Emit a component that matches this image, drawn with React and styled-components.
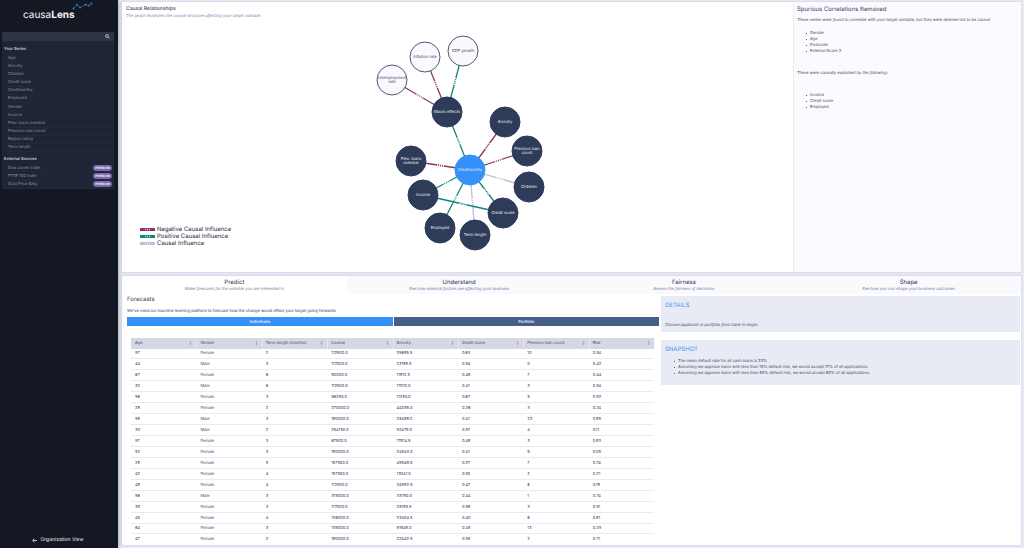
import React from "react";
import styled, { createGlobalStyle } from "styled-components";

const Global = createGlobalStyle`
  *, *::before, *::after { box-sizing: border-box; }
  html, body, #root { height: 100%; }
  body { margin: 0; background: #e9ebf4; overflow: hidden; }
  body, button, input { font-family: Inter, "Liberation Sans", sans-serif; text-rendering: geometricPrecision; }
  h1, h2, h3, p, ul { margin: 0; padding: 0; }
`;

const Page = styled.div`
  display: flex;
  height: 100vh;
  color: #3f4560;
  font-size: 4px;
  line-height: 6px;
`;

const Sidebar = styled.aside`
  flex: 0 0 118px;
  display: flex;
  flex-direction: column;
  padding: 0 4px 4px 2px;
  background: #131822;
  box-shadow: 0 0 5px rgba(60, 60, 90, 0.5);
  z-index: 1;
`;

const Logo = styled.div`
  position: relative;
  height: 32px;
  padding: 8px 0 0 21px;
  color: #f4f5f8;
  font-size: 10px;
  line-height: 14px;
  svg { position: absolute; left: 70px; top: 2px; }
`;

const SearchBar = styled.label`
  display: flex;
  align-items: center;
  height: 9px;
  padding-right: 4px;
  background: #2b3546;
  input { flex: 1; min-width: 0; height: 8px; border: 0; padding: 0 4px; background: none; color: #fff; font-size: 4px; outline: 0; }
`;

const SeriesPanel = styled.div`
  padding: 5px 0 0;
  background: #1e2534;
`;

const SeriesTitle = styled.h2`
  padding-left: 2px;
  color: #c3c9d6;
  font-size: 4px;
  font-weight: 600;
  line-height: 6px;
`;

const SeriesList = styled.ul`
  display: flex;
  flex-direction: column;
  height: ${(p) => p.$height}px;
  margin: 2px 0 4px;
  list-style: none;
  &:last-child { margin-bottom: 0; }
`;

const SeriesItem = styled.li`
  flex: 1;
  display: flex;
  align-items: center;
  justify-content: space-between;
  padding: 0 2px 0 6px;
  border-bottom: 1px solid #222b3c;
  color: #8a96ae;
  line-height: 6px;
`;

const Premium = styled.span`
  width: 19px;
  height: 6px;
  border-radius: 3px;
  background: #7766ac;
  color: #f0ecfb;
  font-size: 3px;
  font-weight: 700;
  line-height: 6px;
  text-align: center;
`;

const OrgLink = styled.a`
  display: flex;
  justify-content: center;
  align-items: center;
  gap: 3px;
  margin-top: auto;
  color: #e6e8ee;
  font-size: 5px;
  line-height: 8px;
  text-decoration: none;
`;

const Main = styled.main`
  flex: 1;
  min-width: 0;
  display: flex;
  flex-direction: column;
  gap: 4px;
  padding: 2px 3px 3px 4px;
`;

const Card = styled.section`
  flex: 1;
  min-height: 0;
  display: flex;
  background: #fff;
  box-shadow: 0 0 2px rgba(150, 155, 190, 0.5);
`;

const ForecastCard = styled(Card)`
  flex-direction: column;
`;

const GraphPane = styled.div`
  flex: 1;
  display: flex;
  flex-direction: column;
  padding: 4px 0 0;
`;

const GraphTitle = styled.h2`
  padding-left: 4px;
  font-size: 5px;
  font-weight: 500;
  line-height: 6px;
`;

const Subtitle = styled.p`
  color: #7b7f9a;
  font-style: italic;
  line-height: 6px;
`;

const GraphSubtitle = styled(Subtitle)`
  padding: 1px 0 0 4px;
`;

const GraphBody = styled.div`
  flex: 1;
  display: grid;
  grid-template-columns: 1fr 177px 1fr;
  padding: 14px 0 25px;
`;

const Legend = styled.ul`
  align-self: end;
  margin-bottom: 8px;
  padding-left: 18px;
  list-style: none;
  color: #262b3c;
  font-size: 6px;
  line-height: 7px;
  li { display: flex; align-items: center; gap: 2px; }
`;

const SidePane = styled.div`
  flex: 0 0 228px;
  padding: 4px 3px;
  border-left: 1px solid #ececf4;
  background: #fafaff;
`;

const PaneTitle = styled.h2`
  font-size: 6px;
  font-weight: 400;
  line-height: 8px;
`;

const Note = styled.p`
  margin-top: ${(p) => p.$top}px;
  font-style: italic;
  line-height: 6px;
`;

const Bullets = styled.ul`
  margin-top: ${(p) => p.$top}px;
  padding-left: 13px;
  list-style: none;
  li { position: relative; line-height: 6px; }
  li::before { content: ""; position: absolute; left: -4px; top: 3px; width: 1px; height: 1px; background: #555b78; }
`;

const Tabs = styled.div`
  display: flex;
  flex: 0 0 18px;
`;

const Tab = styled.button`
  flex: 1;
  padding: 3px 0 2px;
  border: 0;
  background: ${(p) => (p.$active ? "#fff" : "#f9f9fe")};
  color: #30364e;
  font-size: 6px;
  line-height: 7px;
  em { display: block; color: #73778f; font-size: 4px; line-height: 6px; }
`;

const ForecastBody = styled.div`
  flex: 1;
  min-height: 0;
  display: flex;
  gap: 2px;
  padding: 2px 1px 5px 5px;
`;

const ForecastMain = styled.div`
  flex: 1;
  display: flex;
  flex-direction: column;
`;

const Intro = styled.p`
  margin-top: 4px;
  color: #30364e;
  line-height: 6px;
`;

const Segments = styled.div`
  display: flex;
  gap: 1px;
  margin-top: 3px;
`;

const Segment = styled.button`
  flex: 1;
  height: 9px;
  padding: 0;
  border: 0;
  background: ${(p) => (p.$active ? "#3690fa" : "#465f89")};
  color: #f1f5fc;
  font-size: 4px;
  font-weight: 500;
  line-height: 9px;
`;

const TableScroll = styled.div`
  flex: 1;
  min-height: 0;
  overflow: hidden;
  margin: 12px 5px 0 4px;
`;

const Table = styled.table`
  width: 100%;
  height: 208px;
  table-layout: fixed;
  border-collapse: separate;
  border-spacing: 0;
  th { height: 11px; padding: 0 4px 0 3px; background: #d5d7e5; font-weight: 400; text-align: left; border-left: 1px solid #e4e5ef; }
  th:first-child { border-left-color: #d5d7e5; }
  td { padding: 0 4px; border-bottom: 1px solid #eaebf2; line-height: 6px; }
  th > span { display: flex; align-items: center; justify-content: space-between; }
`;

const Aside = styled.div`
  flex: 0 0 359px;
  display: flex;
  flex-direction: column;
  gap: 8px;
`;

const InfoBox = styled.section`
  height: ${(p) => p.$height}px;
  padding: 5px 4px;
  background: #e8ebf4;
`;

const InfoTitle = styled.h3`
  color: #3f96f5;
  font-size: 6px;
  font-weight: 400;
  line-height: 9px;
`;

const nodes = {
  unemployment: [392, 80, ["Unemployment", "rate"], "macro"],
  inflation: [425, 57, ["Inflation rate"], "macro"],
  gdp: [463, 51, ["GDP growth"], "macro"],
  macro: [447, 112, ["Macro effects"]],
  annuity: [505, 122, ["Annuity"]],
  loans: [527, 151, ["Previous loan", "count"]],
  children: [529, 187, ["Children"]],
  score: [503, 213, ["Credit score"]],
  term: [475, 235, ["Term length"]],
  employed: [440, 228, ["Employed"]],
  income: [423, 195, ["Income"]],
  overdue: [411, 161, ["Prev. loans", "overdue"]],
  target: [470, 170, ["Creditworthy"], "target"],
};

const NEG = "#8d3561";
const POS = "#0c877a";
const NEUTRAL = "#bdbdd8";

const edges = [
  ["unemployment", "macro", NEG],
  ["inflation", "macro", NEG],
  ["gdp", "macro", POS],
  ["macro", "target", POS],
  ["annuity", "target", NEG],
  ["loans", "target", NEG],
  ["children", "target", NEUTRAL],
  ["score", "target", POS],
  ["term", "target", NEUTRAL],
  ["employed", "target", POS],
  ["income", "target", POS],
  ["overdue", "target", NEG],
  ["income", "score", POS],
];

const nodeStyles = {
  macro: { fill: "#f9f9fe", stroke: "#4c5878", text: "#3f4560" },
  target: { fill: "#3690fa", stroke: "#3690fa", text: "#e4effc" },
  plain: { fill: "#2e3c5a", stroke: "#2e3c5a", text: "#f0f2f8" },
};

function Edge({ from, to, color }) {
  const [x1, y1] = nodes[from];
  const [x2, y2] = nodes[to];
  const len = Math.hypot(x2 - x1, y2 - y1);
  const ux = (x2 - x1) / len;
  const uy = (y2 - y1) / len;
  const mx = (x1 + x2) / 2;
  const my = (y1 + y2) / 2;
  const half = 3.5;
  return (
    <g>
      <line x1={x1} y1={y1} x2={x2} y2={y2} stroke={color} strokeWidth="1.3" />
      <line x1={mx - ux * half} y1={my - uy * half} x2={mx + ux * half} y2={my + uy * half} stroke="#fff" strokeWidth="1.6" strokeDasharray="1 1" />
    </g>
  );
}

function Node({ x, y, lines, kind = "plain" }) {
  const s = nodeStyles[kind];
  return (
    <g>
      <circle cx={x} cy={y} r="15" fill={s.fill} stroke={s.stroke} strokeWidth="1" />
      {lines.map((line, i) => (
        <text key={line} x={x} y={y + 1 + (i * 2 - (lines.length - 1)) * 2} fill={s.text} fontSize="4" textAnchor="middle">
          {line}
        </text>
      ))}
    </g>
  );
}

function CausalGraph() {
  return (
    <svg width="177" height="222" viewBox="369 33 177 222" role="img" aria-label="Causal graph">
      {edges.map(([from, to, color]) => (
        <Edge key={from + to} from={from} to={to} color={color} />
      ))}
      {Object.entries(nodes).map(([id, [x, y, lines, kind]]) => (
        <Node key={id} x={x} y={y} lines={lines} kind={kind} />
      ))}
    </svg>
  );
}

function LegendMark({ color }) {
  return (
    <svg width="15" height="3" viewBox="0 0 15 3">
      <rect width="15" height="3" rx="0.5" fill={color} />
      <path d="M5 1.5H11" stroke="#fff" strokeOpacity="0.7" strokeWidth="1.4" strokeDasharray="1 1" />
    </svg>
  );
}

const SortIcon = () => (
  <svg width="3" height="4" viewBox="0 0 3 4" fill="#8a8fa8">
    <path d="M1.5 0L2.5 1.6H0.5ZM1.5 4L2.5 2.4H0.5Z" />
  </svg>
);

const series = ["Age", "Annuity", "Children", "Credit score", "Creditworthy", "Employed", "Gender", "Income", "Prev. loans overdue", "Previous loan count", "Region rating", "Term length"];
const sources = ["Dow Jones Index", "FTSE 100 index", "Gold Price $/kg"];

const tabs = [
  ["Predict", "Make forecasts for the variable you are interested in"],
  ["Understand", "See how external factors are affecting your business"],
  ["Fairness", "Assess the fairness of decisions"],
  ["Shape", "See how you can shape your business outcomes"],
];

const columns = ["Age", "Gender", "Term length (months)", "Income", "Annuity", "Credit score", "Previous loan count", "Risk"];
const rows = [
  ["57", "Female", "2", "112500.0", "35685.5", "0.63", "10", "0.54"],
  ["44", "Male", "3", "117000.0", "23188.5", "0.54", "0", "0.42"],
  ["67", "Female", "6", "90000.0", "11812.5", "0.48", "7", "0.44"],
  ["32", "Male", "6", "112500.0", "17010.0", "0.41", "3", "0.54"],
  ["56", "Female", "3", "56250.0", "11250.0", "0.67", "5", "0.92"],
  ["28", "Female", "2", "270000.0", "44055.0", "0.26", "3", "0.24"],
  ["58", "Male", "3", "180000.0", "25488.0", "0.41", "23", "0.85"],
  ["30", "Male", "2", "254150.0", "52479.0", "0.57", "4", "0.11"],
  ["57", "Female", "3", "67500.0", "17914.5", "0.48", "3", "0.83"],
  ["52", "Female", "3", "180000.0", "24543.0", "0.41", "9", "0.05"],
  ["28", "Female", "5", "157500.0", "45949.5", "0.37", "7", "0.74"],
  ["42", "Female", "4", "157500.0", "13041.0", "0.50", "2", "0.21"],
  ["48", "Female", "4", "112500.0", "34582.5", "0.47", "6", "0.18"],
  ["56", "Male", "3", "315000.0", "33750.0", "0.44", "1", "0.74"],
  ["39", "Female", "3", "117000.0", "25195.5", "0.58", "3", "0.51"],
  ["45", "Female", "4", "126000.0", "23404.5", "0.40", "6", "0.81"],
  ["64", "Female", "3", "135000.0", "51948.0", "0.45", "13", "0.25"],
  ["47", "Female", "2", "180000.0", "22442.5", "0.55", "2", "0.71"],
];

export default function App() {
  return (
    <Page>
      <Global />
      <Sidebar>
        <Logo>
          causa<b>Lens</b>
          <svg width="24" height="8" viewBox="0 0 24 8" fill="#2f7fd6">
            <path d="M1.5 6.5L5 3L8 5.5L13.5 2.7L17 3.5L19.5 1.4" fill="none" stroke="#2f6fb5" strokeWidth="0.7" />
            <circle cx="1.5" cy="6.5" r="1" />
            <circle cx="5" cy="3" r="1" />
            <circle cx="8" cy="5.5" r="1" />
            <circle cx="13.5" cy="2.7" r="1" />
            <circle cx="17" cy="3.5" r="1" />
            <circle cx="19.5" cy="1.4" r="1" />
          </svg>
        </Logo>
        <SearchBar>
          <input type="text" aria-label="Search series" />
          <svg width="5" height="5" viewBox="0 0 5 5" fill="none" stroke="#c7cede" strokeWidth="0.8">
            <circle cx="2" cy="2" r="1.4" />
            <path d="M3.1 3.1L4.6 4.6" />
          </svg>
        </SearchBar>
        <SeriesPanel>
          <SeriesTitle>Your Series</SeriesTitle>
          <SeriesList $height={98}>
            {series.map((s) => (
              <SeriesItem key={s}>{s}</SeriesItem>
            ))}
          </SeriesList>
          <SeriesTitle>External Sources</SeriesTitle>
          <SeriesList $height={25}>
            {sources.map((s) => (
              <SeriesItem key={s}>
                {s}
                <Premium>PREMIUM</Premium>
              </SeriesItem>
            ))}
          </SeriesList>
        </SeriesPanel>
        <OrgLink href="#organization">
          <svg width="5" height="5" viewBox="0 0 5 5" fill="none" stroke="#e6e8ee" strokeWidth="0.8">
            <path d="M5 2.5H0.8M2.6 0.6L0.7 2.5L2.6 4.4" />
          </svg>
          Organization View
        </OrgLink>
      </Sidebar>
      <Main>
        <Card>
          <GraphPane>
            <GraphTitle>Causal Relationships</GraphTitle>
            <GraphSubtitle>The graph illustrates the causal structure affecting your target variable</GraphSubtitle>
            <GraphBody>
              <Legend>
                <li><LegendMark color={NEG} />Negative Causal Influence</li>
                <li><LegendMark color={POS} />Positive Causal Influence</li>
                <li><LegendMark color={NEUTRAL} />Causal Influence</li>
              </Legend>
              <CausalGraph />
            </GraphBody>
          </GraphPane>
          <SidePane>
            <PaneTitle>Spurious Correlations Removed</PaneTitle>
            <Note $top={3}>These series were found to correlate with your target variable, but they were deemed not to be causal</Note>
            <Bullets $top={7}>
              <li>Gender</li>
              <li>Age</li>
              <li>Postcode</li>
              <li>External Score 2</li>
            </Bullets>
            <Note $top={16}>These were causally explained by the following:</Note>
            <Bullets $top={16}>
              <li>Income</li>
              <li>Credit score</li>
              <li>Employed</li>
            </Bullets>
          </SidePane>
        </Card>
        <ForecastCard>
          <Tabs role="tablist">
            {tabs.map(([name, hint], i) => (
              <Tab key={name} role="tab" aria-selected={i === 0} $active={i === 0}>
                {name}
                <em>{hint}</em>
              </Tab>
            ))}
          </Tabs>
          <ForecastBody>
            <ForecastMain>
              <PaneTitle>Forecasts</PaneTitle>
              <Intro>We've used our machine learning platform to forecast how the change would effect your target going forwards</Intro>
              <Segments>
                <Segment $active>Individuals</Segment>
                <Segment>Portfolio</Segment>
              </Segments>
              <TableScroll>
                <Table>
                  <thead>
                    <tr>
                      {columns.map((c) => (
                        <th key={c}><span>{c}<SortIcon /></span></th>
                      ))}
                    </tr>
                  </thead>
                  <tbody>
                    {rows.map((r, i) => (
                      <tr key={i}>
                        {r.map((cell, j) => (
                          <td key={j}>{cell}</td>
                        ))}
                      </tr>
                    ))}
                  </tbody>
                </Table>
              </TableScroll>
            </ForecastMain>
            <Aside>
              <InfoBox $height={36}>
                <InfoTitle>DETAILS</InfoTitle>
                <Note $top={12}>Choose applicant or portfolio from table to begin.</Note>
              </InfoBox>
              <InfoBox $height={45}>
                <InfoTitle>SNAPSHOT</InfoTitle>
                <Bullets $top={4}>
                  <li>The mean default rate for all cash loans is 23%</li>
                  <li>Assuming we approve loans with less than 10% default risk, we would accept 17% of all applications.</li>
                  <li>Assuming we approve loans with less than 50% default risk, we would accept 62% of all applications.</li>
                </Bullets>
              </InfoBox>
            </Aside>
          </ForecastBody>
        </ForecastCard>
      </Main>
    </Page>
  );
}
